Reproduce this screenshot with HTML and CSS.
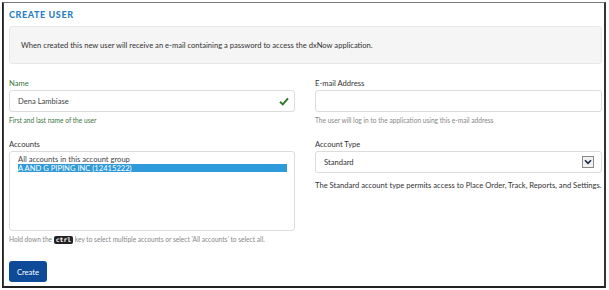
FILE: index.html
```html
<!DOCTYPE html>
<html lang="en">
<head>
    <meta charset="UTF-8">
    <title>Create User</title>
    <link rel="stylesheet" href="styles.css">
</head>
<body>

<div class="frame">
    <h2 class="title">CREATE USER</h2>

    <div class="info-box">
        When created this new user will receive an e-mail containing a password to access the dxNow application.
    </div>

    <div class="form-grid">
        <!-- Left column -->
        <div class="col">
            <div class="field has-success">
                <label class="field-label">Name</label>
                <div class="input-wrap">
                    <input class="text-input" type="text" value="Dena Lambiase">
                    <svg class="check" width="10" height="9" viewBox="0 0 10 9">
                        <path d="M1 4.8 L3.8 7.4 L9 1.4" fill="none" stroke="#2f7a2f" stroke-width="2"/>
                    </svg>
                </div>
                <div class="help">First and last name of the user</div>
            </div>

            <div class="field">
                <label class="field-label">Accounts</label>
                <div class="list-box">
                    <div class="list-option">All accounts in this account group</div>
                    <div class="list-option selected">A AND G PIPING INC (12415222)</div>
                </div>
                <div class="help muted">Hold down the <kbd>ctrl</kbd> key to select multiple accounts or select 'All accounts' to select all.</div>
            </div>
        </div>

        <!-- Right column -->
        <div class="col">
            <div class="field">
                <label class="field-label">E-mail Address</label>
                <div class="input-wrap">
                    <input class="text-input" type="text">
                </div>
                <div class="help muted">The user will log in to the application using this e-mail address</div>
            </div>

            <div class="field">
                <label class="field-label">Account Type</label>
                <div class="select-box">
                    <span>Standard</span>
                    <span class="select-arrow">
                        <svg width="8" height="6" viewBox="0 0 8 6">
                            <path d="M1 1.2 L4 4.4 L7 1.2" fill="none" stroke="#1a2b4a" stroke-width="1.6"/>
                        </svg>
                    </span>
                </div>
                <p class="type-note">The Standard account type permits access to Place Order, Track, Reports, and Settings.</p>
            </div>
        </div>
    </div>

    <button class="create-button">Create</button>
</div>

</body>
</html>
```

FILE: styles.css
```css
body {
    margin: 0;
    padding: 0;
    background: #ffffff;
    font-family: 'Lato', 'Liberation Sans', sans-serif;
    color: #333;
}

.frame {
    box-sizing: border-box;
    width: 604px;
    height: 286px;
    margin: 2px 0 0 2px;
    border: 1px solid #222;
    border-top-color: #777;
    border-right: 2px solid #333;
    border-bottom: 2px solid #222;
    padding: 0 1px 0 6px;
    box-shadow: inset 1px 0 0 #444;
}

.title {
    margin: 0;
    padding-top: 6px;
    height: 17px;
    font-size: 9px;
    font-weight: 900;
    letter-spacing: 0.6px;
    color: #2d7fc4;
}

.info-box {
    box-sizing: border-box;
    height: 38px;
    margin-right: 1px;
    padding: 0 11px;
    display: flex;
    align-items: center;
    background: #f5f5f5;
    border: 1px solid #e8e8e8;
    border-radius: 3px;
    font-size: 7.6px;
    color: #333;
}

.form-grid {
    display: grid;
    grid-template-columns: 286px 287px;
    column-gap: 20px;
    margin-top: 14px;
}

.field-label {
    display: block;
    height: 12px;
    font-size: 7.6px;
    color: #333;
}
.has-success .field-label,
.has-success .help {
    color: #3c763d;
}

.input-wrap {
    position: relative;
}
.text-input {
    box-sizing: border-box;
    display: block;
    width: 100%;
    height: 22px;
    padding: 0 8px;
    border: 1px solid #dcdcdc;
    border-radius: 3px;
    font-family: inherit;
    font-size: 7.6px;
    color: #444;
    outline: none;
}
.check {
    position: absolute;
    right: 6px;
    top: 7px;
}

.help {
    height: 24px;
    padding-top: 4px;
    box-sizing: border-box;
    font-size: 6.6px;
}
.help.muted {
    color: #888;
}

.field + .field {
    margin-top: 3px;
}

.list-box {
    box-sizing: border-box;
    height: 80px;
    padding: 3px 7px 0 8px;
    border: 1px solid #dcdcdc;
    border-radius: 3px;
    font-size: 7.6px;
    line-height: 8.5px;
}
.list-option {
    color: #444;
}
.list-option.selected {
    background: #2f9ad9;
    color: #fff;
}

kbd {
    display: inline-block;
    padding: 0 2px;
    background: #222;
    color: #fff;
    border-radius: 2px;
    font-family: 'DejaVu Sans Mono', monospace;
    font-weight: bold;
    font-size: 6.4px;
    line-height: 8px;
}

.select-box {
    box-sizing: border-box;
    height: 22px;
    padding: 0 8px;
    display: flex;
    align-items: center;
    justify-content: space-between;
    border: 1px solid #dcdcdc;
    border-radius: 3px;
    font-size: 7.6px;
    color: #333;
}
.select-arrow {
    box-sizing: border-box;
    width: 12px;
    height: 12px;
    margin-right: -1px;
    display: flex;
    align-items: center;
    justify-content: center;
    border: 1px solid #8a8a8a;
    background: #f2f2f2;
}

.type-note {
    margin: 7px 0 0;
    font-size: 7.6px;
    color: #333;
}

.create-button {
    margin-top: 6px;
    width: 38px;
    height: 21px;
    padding: 0;
    border: none;
    border-radius: 3px;
    background: #0d4a97;
    color: #fff;
    font-family: inherit;
    font-size: 7.6px;
}
```
